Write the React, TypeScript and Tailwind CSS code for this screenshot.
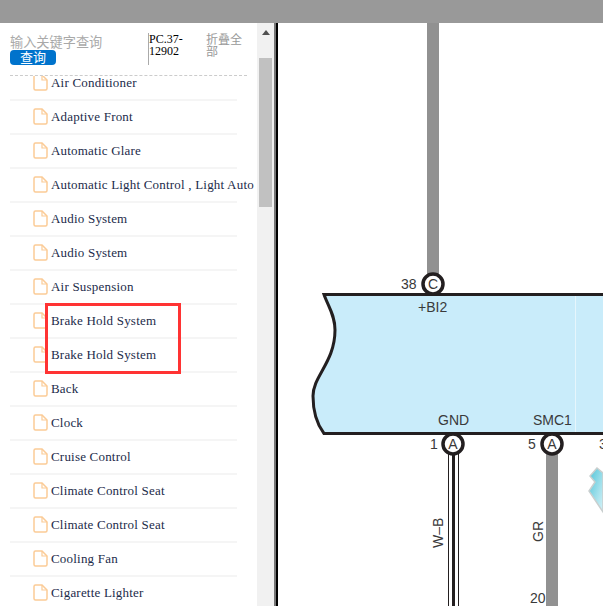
const items = [
  "Air Conditioner",
  "Adaptive Front",
  "Automatic Glare",
  "Automatic Light Control , Light Auto",
  "Audio System",
  "Audio System",
  "Air Suspension",
  "Brake Hold System",
  "Brake Hold System",
  "Back",
  "Clock",
  "Cruise Control",
  "Climate Control Seat",
  "Climate Control Seat",
  "Cooling Fan",
  "Cigarette Lighter",
];

function FileIcon() {
  return (
    <svg width="15" height="17" viewBox="0 0 15 17" fill="none" className="shrink-0 mb-[2px]">
      <path
        d="M2.5 1H9L14 6V14.5C14 15.3 13.3 16 12.5 16H2.5C1.7 16 1 15.3 1 14.5V2.5C1 1.7 1.7 1 2.5 1Z"
        stroke="#fbcb96"
        strokeWidth="1.5"
      />
      <path d="M9 1V6H14" stroke="#fbcb96" strokeWidth="1.2" />
    </svg>
  );
}

function Diagram() {
  const label = "fill-[#3a3a3a] text-[14px] font-['Liberation_Sans',sans-serif]";
  return (
    <svg width="325" height="583" viewBox="278 23 325 583" className="block">
      <defs>
        <linearGradient id="frag" x1="0" y1="0" x2="1" y2="1">
          <stop offset="0" stopColor="#4fc4d8" />
          <stop offset="1" stopColor="#d8f3f8" />
        </linearGradient>
      </defs>
      <rect x="427" y="23" width="12" height="252" fill="#919191" />
      <path
        d="M324 294.500H603V433.500H324C316 423 313 408 313 396C313 376 335 362 335 330C335 315 328 306 324 294.500Z"
        fill="#c9ecfa"
      />
      <path
        d="M603 294.500H324C328 306 335 315 335 330C335 362 313 376 313 396C313 408 316 423 324 433.500H603"
        fill="none"
        stroke="#231f20"
        strokeWidth="3"
      />
      <line x1="575.500" y1="296" x2="575.500" y2="432" stroke="#e6f6fc" strokeWidth="1" />

      <rect x="546" y="450" width="12" height="156" fill="#919191" />
      <line x1="448.500" y1="450" x2="448.500" y2="606" stroke="#231f20" strokeWidth="1" />
      <line x1="458.500" y1="450" x2="458.500" y2="606" stroke="#231f20" strokeWidth="1" />
      <rect x="452" y="450" width="3" height="156" fill="#231f20" />

      <circle cx="433" cy="284" r="10" fill="#ffffff" stroke="#231f20" strokeWidth="3.5" />
      <circle cx="453" cy="444" r="10" fill="#ffffff" stroke="#231f20" strokeWidth="3.5" />
      <circle cx="552" cy="444" r="10" fill="#ffffff" stroke="#231f20" strokeWidth="3.5" />

      <text x="433" y="289" textAnchor="middle" className={label}>C</text>
      <text x="453" y="449" textAnchor="middle" className={label}>A</text>
      <text x="552" y="449" textAnchor="middle" className={label}>A</text>
      <text x="401" y="289" className={label}>38</text>
      <text x="418" y="312" className={label}>+BI2</text>
      <text x="438" y="425" className={label}>GND</text>
      <text x="533" y="425" className={label}>SMC1</text>
      <text x="430" y="449" className={label}>1</text>
      <text x="528" y="449" className={label}>5</text>
      <text x="599" y="449" className={label}>3</text>
      <text x="530" y="603" className={label}>20</text>
      <text transform="translate(443 548) rotate(-90)" className={label}>W–B</text>
      <text transform="translate(543 542) rotate(-90)" className={label}>GR</text>

      <path
        d="M597 468L590 476L595 482L589 491L603 512V473Z"
        fill="url(#frag)"
        stroke="#c9cfcf"
        strokeWidth="1.5"
      />
    </svg>
  );
}

export default function App() {
  return (
    <div className="relative w-[603px] h-[606px] overflow-hidden bg-white font-['Liberation_Serif',serif]">
      <div className="h-[23px] bg-[#999999]" />
      <div className="flex h-[583px]">
        <aside className="w-[257px] shrink-0 flex flex-col overflow-hidden">
          <div className="relative z-10 h-[53px] shrink-0 mx-[10px] border-b border-dashed border-[#cccccc] bg-white flex pt-[10px]">
            <div className="w-[138px] shrink-0 font-['Liberation_Sans','Noto_Sans_CJK_SC',sans-serif]">
              <div className="text-[13.2px] leading-[15px] text-[#a9a9a9] mt-[2px]">输入关键字查询</div>
              <button className="block w-[46px] h-[15px] rounded-[4px] bg-[#0073cc] text-white text-[13px] leading-[15px]">
                查询
              </button>
            </div>
            <div className="w-[58px] shrink-0 h-[32px] border-l border-[#aaaaaa] text-[12px] leading-[12px] text-black">
              PC.37-
              <br />
              12902
            </div>
            <div className="w-[42px] text-[12px] leading-[12px] text-[#999999] font-['Liberation_Sans','Noto_Sans_CJK_SC',sans-serif] pt-[1px]">
              折叠全部
            </div>
          </div>
          <ul className="-mt-[9px] ml-[10px] w-[227px]">
            {items.map((item, i) => (
              <li
                key={i}
                className="h-[34px] flex items-center gap-[3px] pl-[23px] border-b-2 border-[#f5f5f5] text-[13px] tracking-[0.2px] text-[#1c2b4a] whitespace-nowrap"
              >
                <FileIcon />
                <span>{item}</span>
              </li>
            ))}
          </ul>
        </aside>

        <div className="relative w-[17px] shrink-0 bg-[#f1f1f1]">
          <div className="mx-auto mt-[7px] w-0 h-0 border-x-[4px] border-x-transparent border-b-[5px] border-b-[#505050]" />
          <div className="absolute left-[2px] top-[35px] w-[13px] h-[149px] bg-[#c1c1c1]" />
        </div>
        <div className="w-[2px] shrink-0 bg-[#777777]" />
        <div className="w-[2px] shrink-0 bg-black" />
        <Diagram />
      </div>
      <div className="absolute left-[45px] top-[303px] w-[136px] h-[71px] border-[3px] border-[#ff3333]" />
    </div>
  );
}
